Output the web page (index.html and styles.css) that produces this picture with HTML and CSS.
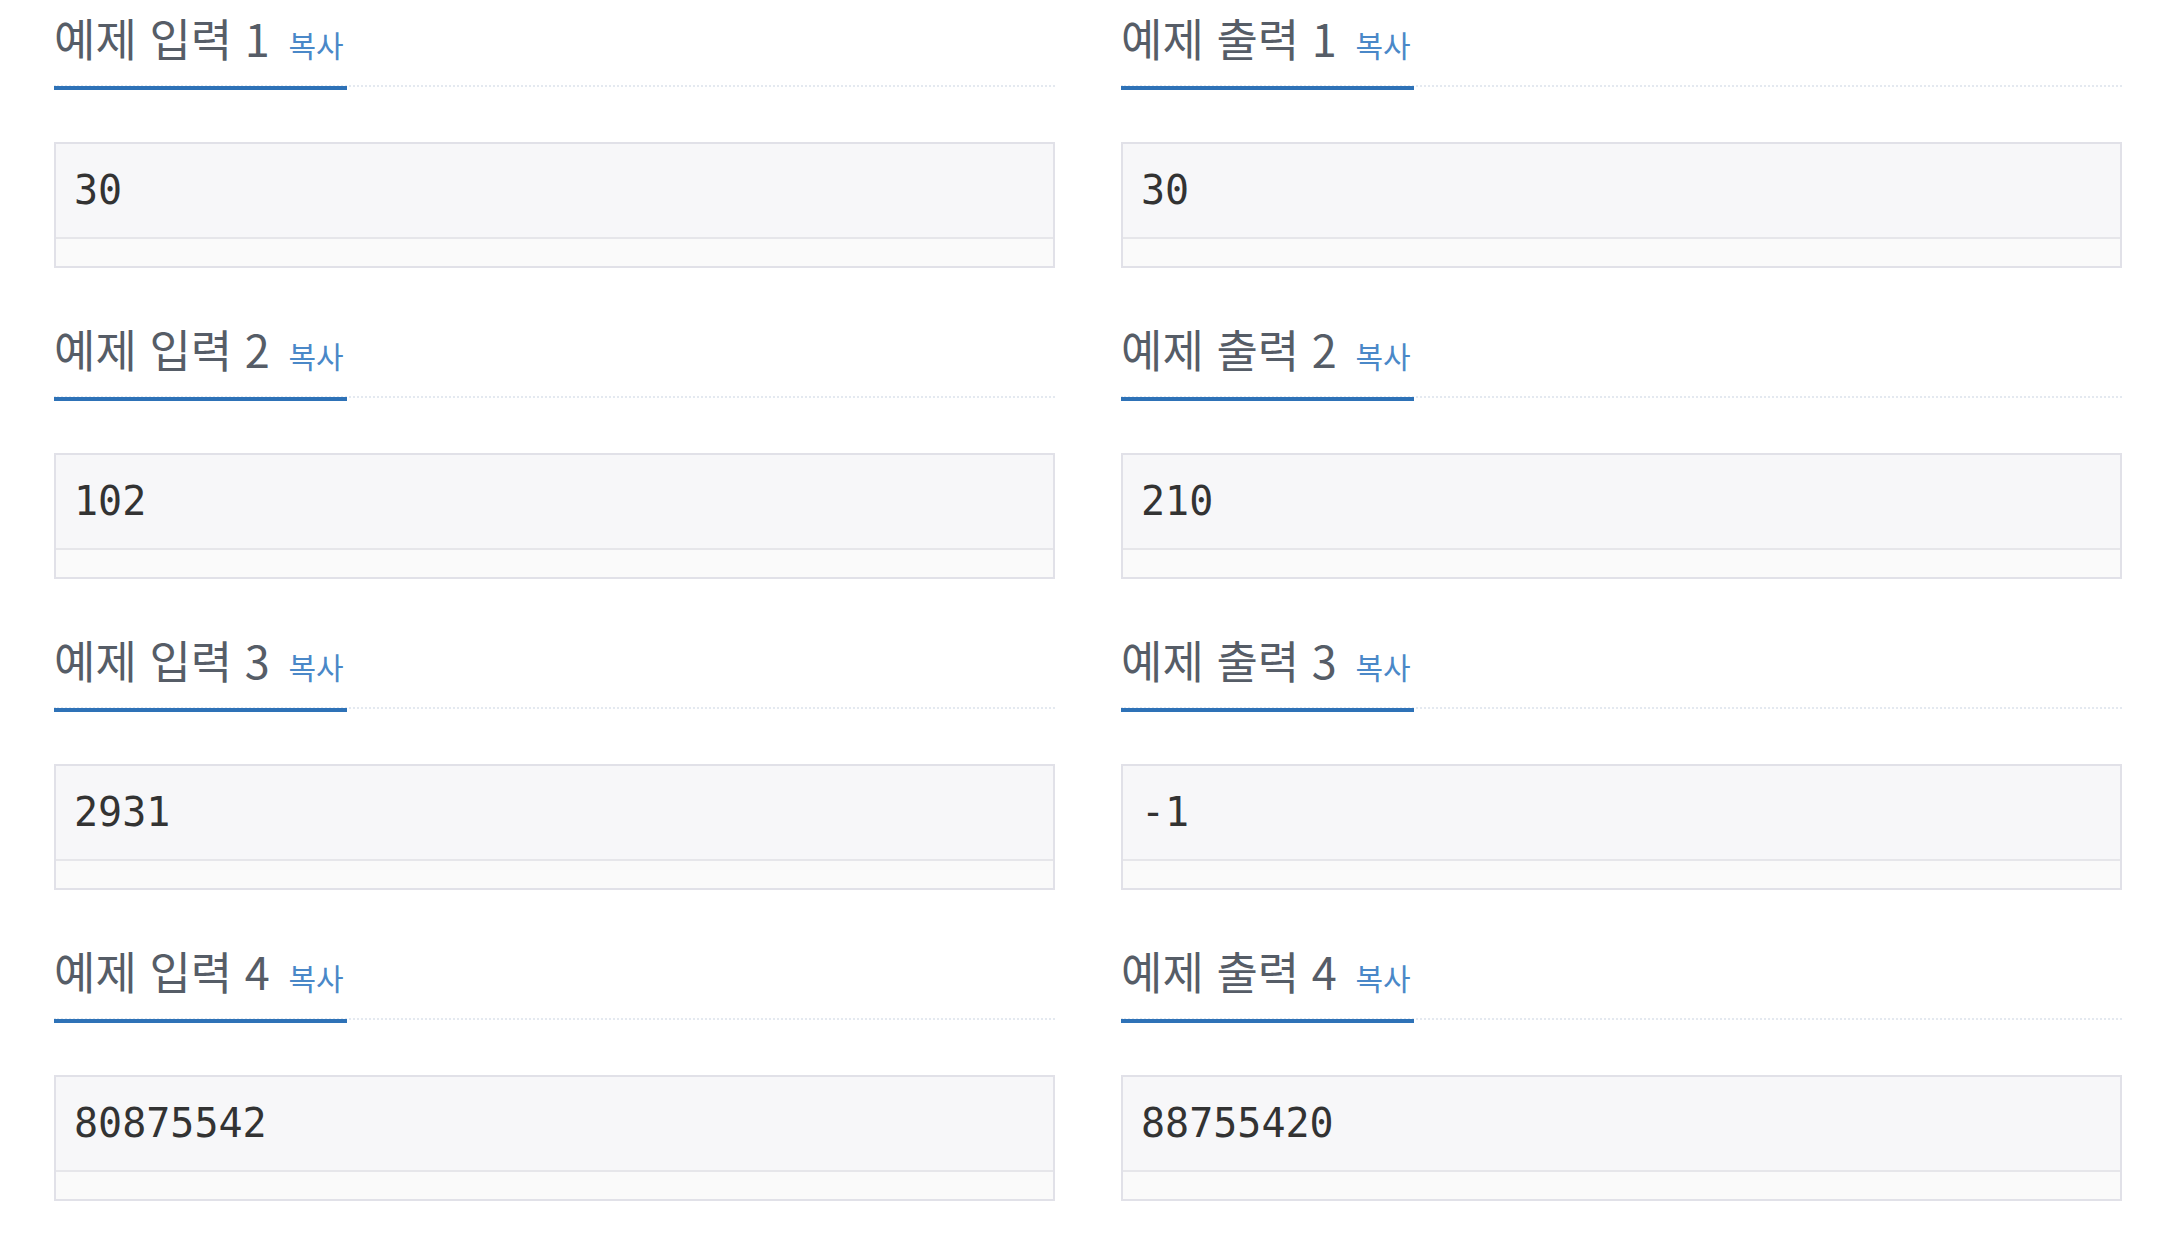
FILE: index.html
```html
<!DOCTYPE html>
<html lang="ko">
<head>
<meta charset="utf-8">
<title>예제</title>
<link rel="stylesheet" href="styles.css">
</head>
<body>
<div class="samples">
  <div class="row">
    <section class="sample">
      <div class="headline"><h2>예제 입력 1 <span class="copy">복사</span></h2></div>
      <div class="box"><pre class="data">30</pre><div class="track"></div></div>
    </section>
    <section class="sample">
      <div class="headline"><h2>예제 출력 1 <span class="copy">복사</span></h2></div>
      <div class="box"><pre class="data">30</pre><div class="track"></div></div>
    </section>
  </div>
  <div class="row">
    <section class="sample">
      <div class="headline"><h2>예제 입력 2 <span class="copy">복사</span></h2></div>
      <div class="box"><pre class="data">102</pre><div class="track"></div></div>
    </section>
    <section class="sample">
      <div class="headline"><h2>예제 출력 2 <span class="copy">복사</span></h2></div>
      <div class="box"><pre class="data">210</pre><div class="track"></div></div>
    </section>
  </div>
  <div class="row">
    <section class="sample">
      <div class="headline"><h2>예제 입력 3 <span class="copy">복사</span></h2></div>
      <div class="box"><pre class="data">2931</pre><div class="track"></div></div>
    </section>
    <section class="sample">
      <div class="headline"><h2>예제 출력 3 <span class="copy">복사</span></h2></div>
      <div class="box"><pre class="data">-1</pre><div class="track"></div></div>
    </section>
  </div>
  <div class="row">
    <section class="sample">
      <div class="headline"><h2>예제 입력 4 <span class="copy">복사</span></h2></div>
      <div class="box"><pre class="data">80875542</pre><div class="track"></div></div>
    </section>
    <section class="sample">
      <div class="headline"><h2>예제 출력 4 <span class="copy">복사</span></h2></div>
      <div class="box"><pre class="data">88755420</pre><div class="track"></div></div>
    </section>
  </div>
</div>
</body>
</html>
```
FILE: styles.css
```css
html, body {
  margin: 0;
  padding: 0;
  background: #ffffff;
}
body {
  font-family: "Noto Sans CJK KR", "Noto Sans", sans-serif;
}
.samples {
  padding-left: 54px;
  width: 2068px;
}
.row {
  display: grid;
  grid-template-columns: 1001px 1001px;
  column-gap: 66px;
}
.sample {
  padding-bottom: 43px;
}
.headline {
  display: flex;
  border-bottom: 2px dotted #e4e9f0;
  margin-bottom: 55px;
}
.headline h2 {
  margin: 14px 0 -5px 0;
  padding: 0 3px 24px 0;
  font-size: 45px;
  line-height: 48px;
  font-weight: 400;
  color: #565d67;
  border-bottom: 4px solid #2e72b7;
  white-space: nowrap;
}
.copy {
  margin-left: 6px;
  font-size: 30px;
  line-height: 1;
  color: #4a88c8;
}
.box {
  border: 2px solid #e1e1e8;
  background: #f7f7f9;
}
.data {
  margin: 0;
  padding: 18px 18px;
  font-family: "DejaVu Sans Mono", "Liberation Mono", monospace;
  font-size: 40px;
  line-height: 57px;
  color: #333333;
}
.track {
  height: 27px;
  border-top: 2px solid #e6e6ea;
  background: #fafafa;
}
```
